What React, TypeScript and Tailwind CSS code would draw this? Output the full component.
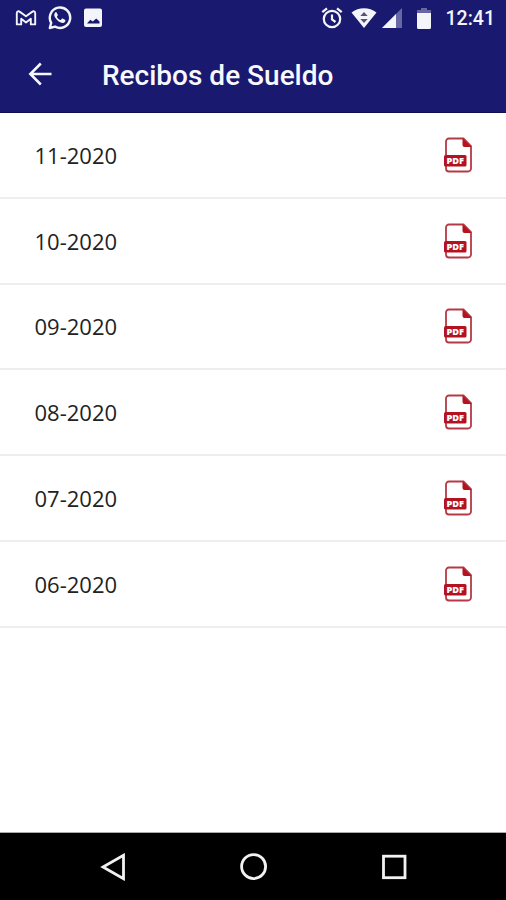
import React from "react";

const receipts = ["11-2020", "10-2020", "09-2020", "08-2020", "07-2020", "06-2020"];

const StatusBar = () => (
  <div className="flex h-9 items-center justify-between pl-[15px] pr-[11px] text-[#f4f4fb]">
    <div className="flex items-center">
      {/* Gmail */}
      <svg className="h-4 w-[22px]" viewBox="0 0 22 16" fill="none" stroke="currentColor" strokeWidth="1.900" strokeLinejoin="round">
        <path d="M1.800 14.400V3.200c0-1.800 1.800-2.400 3.100-1.300L11 6.200l6.100-4.300c1.300-1.100 3.100-.5 3.100 1.300v11.200h-4.400V8.800L11 12.600 6.200 8.800v5.600z" />
      </svg>
      {/* WhatsApp */}
      <svg className="ml-[11px] h-6 w-6" viewBox="0 0 24 24">
        <path
          d="M1.800 22l1.400-5.200A10.200 10.200 0 1 1 7.100 20.600z"
          fill="none"
          stroke="currentColor"
          strokeWidth="2.400"
          strokeLinejoin="round"
        />
        <path
          d="M8.400 6.200c-.5-.2-1 0-1.400.5-1.300 1.400-.9 3.400.3 5.100 1.700 2.500 3.700 4.300 6.100 5 1.600.5 3.400-.2 3.900-1.600.2-.7.1-1.200-.3-1.400l-2.400-1.200c-.4-.2-.7-.1-1 .3l-.8 1c-.3.3-.6.2-.9 0-1.300-.7-2.200-1.600-2.900-2.700-.2-.4-.1-.6.1-.8l.6-.9c.2-.3.2-.5.1-.8z"
          fill="currentColor"
        />
      </svg>
      {/* Gallery */}
      <svg className="ml-[11px] h-5 w-5" viewBox="0 0 20 20">
        <path
          fillRule="evenodd"
          d="M3 .5h14A2 2 0 0 1 19 2.500v14.500a2 2 0 0 1-2 2H3a2 2 0 0 1-2-2V2.500a2 2 0 0 1 2-2zM4 15.600h12.500V13.500L13.200 10.500l-3.400 3-2.500-1.700z"
          fill="currentColor"
        />
      </svg>
    </div>

    <div className="flex items-center">
      {/* Alarm */}
      <svg className="h-[22px] w-[22px]" viewBox="0 0 22 22" fill="none" stroke="currentColor" strokeWidth="2.200">
        <circle cx="11" cy="12" r="8.200" />
        <path d="M11 7.500v5l3.500 2.500M1.300 5.200L6 1.300M20.700 5.200L16 1.300" />
      </svg>
      {/* Wi-Fi */}
      <svg className="ml-2 h-5 w-[26px]" viewBox="0 0 26 20">
        <path d="M13 20L.5 4.500C7.500-1.200 18.500-1.200 25.500 4.500z" fill="currentColor" />
        <path d="M9.300 8L13 4 16.700 8zM9.300 11L13 15 16.700 11z" fill="#55556f" />
      </svg>
      {/* Signal */}
      <svg className="ml-[5px] h-5 w-5" viewBox="0 0 20 20">
        <path d="M20 0v20H0z" fill="#6767a4" />
        <path d="M14 6v14H0z" fill="currentColor" />
      </svg>
      {/* Battery */}
      <svg className="ml-[15px] h-[21px] w-[14px]" viewBox="0 0 14 21">
        <path d="M4 0h6v2h4v4H0V2h4z" fill="#6767a4" />
        <path d="M0 5h14v14.500a1.500 1.500 0 0 1-1.500 1.500h-11A1.500 1.500 0 0 1 0 19.500z" fill="currentColor" />
      </svg>
      <span className="ml-[15px] pt-px font-[Roboto,sans-serif] text-[19.500px] leading-none font-medium">12:41</span>
    </div>
  </div>
);

const PdfIcon = () => (
  <svg className="h-9 w-[30px]" viewBox="0 0 30 36">
    <path
      d="M20.500 1.500H6a3 3 0 0 0-3 3v27a3 3 0 0 0 3 3h19a3 3 0 0 0 3-3V9z"
      fill="none"
      stroke="#b53a45"
      strokeWidth="1.800"
    />
    <path d="M19.500 1l9 9h-7a2 2 0 0 1-2-2z" fill="#b5121f" />
    <rect x="1" y="18" width="22.500" height="11.500" rx="1.500" fill="#b5121f" />
    <text
      x="12.200"
      y="27.100"
      textAnchor="middle"
      fontFamily="Open Sans, sans-serif"
      fontSize="9.200"
      fontWeight="800"
      fill="#fff"
    >
      PDF
    </text>
  </svg>
);

const App = () => {
  return (
    <div className="flex h-[900px] w-[506px] flex-col overflow-hidden bg-white">
      <header className="h-[113px] shrink-0 border-b border-[#101050] bg-[#191970]">
        <StatusBar />
        <div className="flex h-[76px] items-center pl-7 text-[#f8f8ff]">
          <button className="h-6 w-6" aria-label="Volver">
            <svg className="h-6 w-6" viewBox="0 0 24 24" fill="none" stroke="currentColor" strokeWidth="2.500">
              <path d="M23.500 12H2.500M12.800 1.500L2.300 12l10.500 10.500" />
            </svg>
          </button>
          <h1 className="ml-[50px] pt-[3px] font-[Roboto,sans-serif] text-[28px] leading-none font-medium whitespace-nowrap">
            Recibos de Sueldo
          </h1>
        </div>
      </header>

      {/* Receipts list */}
      <ul className="flex-1">
        {receipts.map((receipt) => (
          <li
            key={receipt}
            className="flex h-[85.8px] items-center justify-between border-b-2 border-[#eeeeee] pr-[33px] pl-[34.5px]"
          >
            <span className="pt-px font-['Open_Sans',sans-serif] text-[22px] text-[#222222]">{receipt}</span>
            <PdfIcon />
          </li>
        ))}
      </ul>

      {/* Navigation bar */}
      <nav className="flex h-[68px] shrink-0 items-center justify-between border-t border-[#aaaaaa] bg-black pr-[98px] pl-[100px] text-[#f2f2f2]">
        <svg className="h-7 w-7" viewBox="0 0 28 28" fill="none" stroke="currentColor" strokeWidth="2.800">
          <path d="M23.500 2.300v23.400L3 14z" />
        </svg>
        <svg className="h-7 w-7" viewBox="0 0 28 28" fill="none" stroke="currentColor" strokeWidth="2.800">
          <circle cx="13.600" cy="13.600" r="12" />
        </svg>
        <svg className="h-7 w-7" viewBox="0 0 28 28" fill="none" stroke="currentColor" strokeWidth="2.800">
          <rect x="3.500" y="3.200" width="21.500" height="21.500" />
        </svg>
      </nav>
    </div>
  );
};

export default App;
